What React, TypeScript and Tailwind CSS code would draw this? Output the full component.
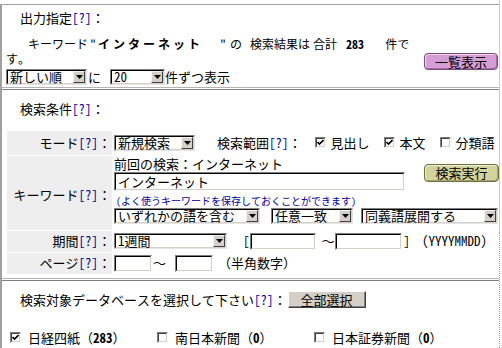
import React from "react";

function Help() {
  return <span className="text-[#000099]">[?]</span>;
}

function Arrow() {
  return (
    <div className="flex h-full w-[12px] shrink-0 items-center justify-center border border-t-[#f4f4f4] border-l-[#f4f4f4] border-r-[#404040] border-b-[#404040] bg-[#d4d0c8]">
      <svg width="7" height="4" viewBox="0 0 7 4">
        <path d="M0 0H7L3.5 4Z" fill="#000" />
      </svg>
    </div>
  );
}

function Select({ w, children }: { w: string; children?: React.ReactNode }) {
  return (
    <div className={`${w} h-[16px] shrink-0 border border-t-[#808080] border-l-[#808080] border-r-[#e4e4e4] border-b-[#e4e4e4]`}>
      <div className="flex h-full border border-t-black border-l-black border-r-[#d4d0c8] border-b-[#d4d0c8] bg-white">
        <div className="flex min-w-0 flex-1 items-center whitespace-nowrap pl-[2px] leading-[12px]">
          {children}
        </div>
        <Arrow />
      </div>
    </div>
  );
}

function TextInput({ w, h, children }: { w: string; h: string; children?: React.ReactNode }) {
  return (
    <div className={`${w} ${h} shrink-0 border border-t-[#808080] border-l-[#808080] border-r-white border-b-white`}>
      <div className="flex h-full items-center border border-t-black border-l-black border-r-[#d4d0c8] border-b-[#d4d0c8] bg-white pl-[2px] leading-[13px] whitespace-nowrap">
        {children}
      </div>
    </div>
  );
}

function Check({ checked }: { checked?: boolean }) {
  return (
    <div className="h-[11px] w-[11px] shrink-0 border border-t-[#808080] border-l-[#808080] border-r-white border-b-white">
      <div className="flex h-full w-full items-center justify-center border border-t-[#404040] border-l-[#404040] border-r-[#d4d0c8] border-b-[#d4d0c8] bg-white">
        {checked && (
          <svg width="7" height="7" viewBox="0 0 7 7">
            <path d="M0.5 3 L2.5 5 L6.5 1" stroke="#000" strokeWidth="1.6" fill="none" />
          </svg>
        )}
      </div>
    </div>
  );
}

function Label({ children }: { children: React.ReactNode }) {
  return (
    <span className="whitespace-nowrap">
      {children}
      <Help />
      <span>：</span>
    </span>
  );
}

function Sep() {
  return <div className="h-[3px] border-t border-b border-t-[#b4b4b4] border-b-[#808080]" />;
}

function DbItem({ checked, name, count, w }: { checked?: boolean; name: string; count: string; w: string }) {
  return (
    <div className={`flex ${w} items-center whitespace-nowrap`}>
      <Check checked={checked} />
      <span className="ml-[7px]">{name}</span>
      <span>（</span>
      <span className="font-bold">{count}</span>
      <span>）</span>
    </div>
  );
}

export default function App() {
  return (
    <div className="flex h-[348px] w-[502px] overflow-hidden bg-white text-[13px] text-black font-['Noto_Sans_Mono_CJK_JP','Noto_Sans_CJK_JP',sans-serif]">
      <div className="w-[499px] shrink-0 pt-[4px]">
        <div className="border-l-2 border-t border-l-[#a0a0a0] border-t-[#a0a0a0]">
          {/* Panel 1 */}
          <div>
            <div className="pl-[18px] pt-[6px] leading-[13px]">
              <Label>出力指定</Label>
            </div>
            <div className="mt-[12px] flex items-start">
              <div className="flex-1 pl-[4px]">
                <div className="flex h-[15px] items-center whitespace-nowrap text-[12px]">
                  <span className="ml-[22px]">キーワード</span>
                  <span className="ml-[2px]">"</span>
                  <span className="ml-[2px] font-bold tracking-[3px]">インターネット</span>
                  <span className="ml-[17px]">"</span>
                  <span className="ml-[4px]">の</span>
                  <span className="ml-[8px]">検索結果は</span>
                  <span className="ml-[3px]">合計</span>
                  <span className="ml-[9px] font-bold">283</span>
                  <span className="ml-[21px]">件で</span>
                </div>
                <div className="h-[15px] text-[12px] leading-[15px]">す。</div>
                <div className="mt-[1px] flex items-center">
                  <Select w="w-[81px]">新しい順</Select>
                  <span className="ml-[1px]">に</span>
                  <span className="ml-[9px]">
                    <Select w="w-[55px]">20</Select>
                  </span>
                  <span>件ずつ表示</span>
                </div>
              </div>
              <div className="mr-[1px] mt-[17px] flex h-[17px] w-[74px] shrink-0 items-center justify-center rounded-[4px] border border-[#7a4a7a] bg-[#d49dd4] leading-none shadow-[inset_-1px_-1px_0_#a86aa8,inset_1px_1px_0_#f0d4f0]">
                一覧表示
              </div>
            </div>
          </div>

          <Sep />

          {/* Panel 2 */}
          <div className="pb-[4px]">
            <div className="pl-[18px] pt-[12px] leading-[13px]">
              <Label>検索条件</Label>
            </div>
            <div className="ml-[5px] mt-[16px] flex flex-col gap-[1px]">
              {/* モード */}
              <div className="flex h-[24px]">
                <div className="flex w-[105px] shrink-0 items-center justify-end bg-[#eeeeee] pr-[1px]">
                  <Label>モード</Label>
                </div>
                <div className="ml-[1px] flex flex-1 items-center pl-[1px]">
                  <Select w="w-[81px]">新規検索</Select>
                  <span className="ml-[22px] whitespace-nowrap">
                    検索範囲
                    <Help />：
                  </span>
                  <span className="ml-[13px]">
                    <Check checked />
                  </span>
                  <span className="ml-[5px]">見出し</span>
                  <span className="ml-[14px]">
                    <Check checked />
                  </span>
                  <span className="ml-[5px]">本文</span>
                  <span className="ml-[14px]">
                    <Check />
                  </span>
                  <span className="ml-[5px]">分類語</span>
                </div>
              </div>
              {/* キーワード */}
              <div className="flex h-[74px]">
                <div className="flex w-[105px] shrink-0 items-start justify-end bg-[#eeeeee] pr-[1px] pt-[32px] leading-[13px]">
                  <Label>キーワード</Label>
                </div>
                <div className="ml-[1px] flex flex-1 flex-col pl-[1px]">
                  <div className="flex">
                    <div className="flex w-[291px] flex-col">
                      <div className="h-[16px] leading-[16px] whitespace-nowrap">前回の検索：インターネット</div>
                      <TextInput w="w-[291px]" h="h-[19px]">
                        インターネット
                      </TextInput>
                    </div>
                    <div className="ml-auto mt-[8px] flex h-[18px] w-[75px] shrink-0 items-center justify-center rounded-[4px] border border-[#6e6e3e] bg-[#d2d29c] leading-none shadow-[inset_-1px_-1px_0_#a4a46a,inset_1px_1px_0_#f0f0d4]">
                      検索実行
                    </div>
                  </div>
                  <div className="mt-[4px] h-[12px] whitespace-nowrap pl-[2px] text-[10px] leading-[12px] text-[#000099]">
                    (よく使うキーワードを保存しておくことができます)
                  </div>
                  <div className="mt-[1px] flex items-center">
                    <Select w="w-[146px]">いずれかの語を含む</Select>
                    <span className="ml-[11px]">
                      <Select w="w-[82px]">任意一致</Select>
                    </span>
                    <span className="ml-[8px]">
                      <Select w="w-[137px]">同義語展開する</Select>
                    </span>
                  </div>
                </div>
              </div>
              {/* 期間 */}
              <div className="flex h-[21px]">
                <div className="flex w-[105px] shrink-0 items-center justify-end bg-[#eeeeee] pr-[1px]">
                  <Label>期間</Label>
                </div>
                <div className="ml-[1px] flex flex-1 items-center pl-[1px] whitespace-nowrap">
                  <Select w="w-[113px]">1週間</Select>
                  <span className="ml-[16px]">[</span>
                  <TextInput w="w-[66px]" h="h-[17px]" />
                  <span className="ml-[6px]">～</span>
                  <TextInput w="w-[67px]" h="h-[17px]" />
                  <span className="ml-[2px]">]</span>
                  <span className="ml-[12px]">(YYYYMMDD)</span>
                </div>
              </div>
              {/* ページ */}
              <div className="flex h-[21px]">
                <div className="flex w-[105px] shrink-0 items-center justify-end bg-[#eeeeee] pr-[1px]">
                  <Label>ページ</Label>
                </div>
                <div className="ml-[1px] flex flex-1 items-center pl-[1px] whitespace-nowrap">
                  <TextInput w="w-[38px]" h="h-[17px]" />
                  <span className="ml-[1px]">～</span>
                  <span className="ml-[9px]">
                    <TextInput w="w-[38px]" h="h-[17px]" />
                  </span>
                  <span className="ml-[5px]">（半角数字）</span>
                </div>
              </div>
            </div>
          </div>

          <Sep />

          {/* Panel 3 */}
          <div>
            <div className="mt-[9px] flex items-center pl-[18px]">
              <span className="whitespace-nowrap">
                検索対象データベースを選択して下さい
                <Help />：
              </span>
              <div className="ml-[1px] flex h-[17px] w-[78px] shrink-0 items-center justify-center border border-t-white border-l-white border-r-[#404040] border-b-[#404040] bg-[#d4d0c8] leading-none shadow-[inset_-1px_-1px_0_#808080]">
                全部選択
              </div>
            </div>
            <div className="mt-[20px] flex flex-col pl-[8px]">
              <div className="flex h-[17px] items-center">
                <DbItem checked name="日経四紙" count="283" w="w-[147px]" />
                <DbItem name="南日本新聞" count="0" w="w-[157px]" />
                <DbItem name="日本証券新聞" count="0" w="w-[170px]" />
              </div>
              <div className="flex h-[17px] items-center">
                <DbItem name="朝日新聞" count="0" w="w-[147px]" />
                <DbItem name="四国新聞" count="0" w="w-[157px]" />
                <DbItem name="日本工業新聞" count="0" w="w-[170px]" />
              </div>
            </div>
          </div>
        </div>
      </div>
      <div className="flex w-[1px] shrink-0 flex-col">
        <div className="h-[232px] bg-[#cccccc]" />
        <div className="flex-1 border-l border-dotted border-l-[#a0a0a0]" />
      </div>
    </div>
  );
}
